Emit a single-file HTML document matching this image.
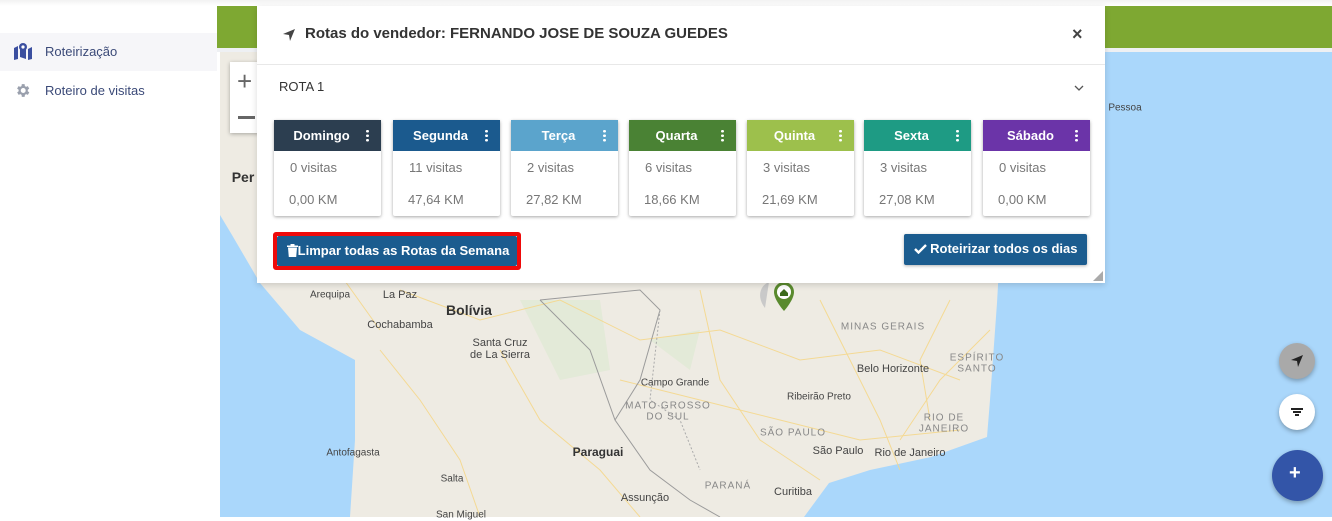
<!DOCTYPE html>
<html><head><meta charset="utf-8"><style>
*{margin:0;padding:0;box-sizing:border-box}
body{width:1332px;height:517px;overflow:hidden;background:#fff;font-family:"Liberation Sans",sans-serif;position:relative}
.abs{position:absolute}
.side{left:0;top:0;width:217px;height:517px;background:#fff}
.topshadow{left:0;top:0;width:1332px;height:6px;background:linear-gradient(#f2f2f2,#fff)}
.item{left:0;width:217px;height:38px;font-size:13px;color:#3b4a78}
.green{left:217px;top:6px;width:1115px;height:42px;background:#7ea832}
.gap{left:217px;top:48px;width:1115px;height:4px;background:#eef0f3}
.map{left:220px;top:52px;width:1112px;height:465px;background:#aad7fb;overflow:hidden}
.modal{left:257px;top:6px;width:848px;height:277px;background:#fff;box-shadow:0 2px 6px rgba(0,0,0,.15)}
.card{top:114px;width:107px;height:96px;background:#fff;box-shadow:0 1px 3px rgba(0,0,0,.35);border-radius:2px}
.card .h{height:31px;color:#fff;font-weight:bold;font-size:13px;line-height:31px;text-align:center;position:relative;padding-right:12px}
.card .h i{position:absolute;right:12px;top:9px;width:3px;height:13px;background:radial-gradient(circle,#fff 1.3px,transparent 1.5px) 0 0/3px 4.5px repeat-y}
.card .v{font-size:13px;color:#777;padding-left:16px;margin-top:9px}
.card .k{font-size:13px;color:#777;padding-left:15px;margin-top:17px}
.btn{background:#1b5c8f;color:#fff;font-weight:bold;font-size:13px;border-radius:2px;line-height:30px}
.lbl{font-size:11px;color:#444;position:absolute;white-space:nowrap;transform:translate(-50%,-50%)}
.st{font-size:10px;color:#888;letter-spacing:1px;position:absolute;white-space:nowrap;transform:translate(-50%,-50%)}
.fab{border-radius:50%;box-shadow:0 2px 5px rgba(0,0,0,.3)}
</style></head><body>
<div class="abs side"></div>
<div class="abs topshadow"></div>
<div class="abs item" style="top:33px;background:#f6f6f9"></div>
<svg class="abs" style="left:13px;top:42px" width="20" height="18" viewBox="0 0 20 18"><path d="M1 6l4-2v13l-4 1z M7 5l6 2v10l-6-2z M15 7l4-2v12l-4 1z" fill="#3b4fa0"/><circle cx="10" cy="5" r="4" fill="#3b4fa0"/><circle cx="10" cy="5" r="1.6" fill="#fff"/></svg>
<div class="abs" style="left:45px;top:44px;font-size:13px;color:#3b4a78">Roteirização</div>
<svg class="abs" style="left:14px;top:82px" width="17" height="17" viewBox="0 0 24 24"><path fill="#9aa0ad" d="M19.4 13a7.5 7.5 0 000-2l2.1-1.6-2-3.5-2.5 1a7 7 0 00-1.7-1L15 3h-4l-.4 2.9a7 7 0 00-1.7 1l-2.5-1-2 3.5L6.6 11a7.5 7.5 0 000 2l-2.1 1.6 2 3.5 2.5-1a7 7 0 001.7 1L11 21h4l.4-2.9a7 7 0 001.7-1l2.5 1 2-3.5zM13 15.5a3.5 3.5 0 110-7 3.5 3.5 0 010 7z"/></svg>
<div class="abs" style="left:45px;top:83px;font-size:13px;color:#3b4a78">Roteiro de visitas</div>

<div class="abs green"></div>
<div class="abs gap"></div>
<div class="abs map">
<svg width="1112" height="465" viewBox="220 52 1112 465" style="position:absolute;left:0;top:0">
<path d="M220 52 L1010 52 L1000 250 L997 303 L990 400 L987 437 L931 457 L870 470 L829 483 L804 517 L350 517 L355 440 L355 360 L300 330 L260 283 L232 235 L220 215 Z" fill="#eeebe3"/>
<path d="M520 300 L600 300 L610 370 L560 380 Z M650 340 L700 330 L690 370Z" fill="#e3ead8"/>
<g stroke="#f5d88c" stroke-width="1" fill="none" opacity=".9">
<path d="M400 290 L480 320 L560 300 L640 340 L720 330 L800 360 L880 350 L960 380"/>
<path d="M700 290 L720 380 L760 440 L820 480"/>
<path d="M820 300 L850 360 L880 420 L900 470"/>
<path d="M620 380 L700 400 L780 420 L860 440 L960 430"/>
<path d="M260 100 L300 180 L330 260 L380 330"/>
<path d="M950 300 L920 360 L930 420"/>
<path d="M500 350 L540 420 L600 470 L640 517"/>
<path d="M380 350 L420 400 L460 460 L480 517"/>
<path d="M990 330 L940 380 L900 440"/>
</g>
<path d="M540 300 L590 350 L615 420 L650 470 L690 500 L720 517" stroke="#9b9b9b" stroke-width="1" fill="none"/>
<path d="M540 300 L560 298 L640 290 L660 310 L640 380 L615 420" stroke="#9b9b9b" stroke-width="1" fill="none"/>
<path d="M660 310 L650 400 L680 420 L700 470" stroke="#aaa" stroke-width="1" fill="none" stroke-dasharray="2 2"/>
</svg>
</div>
<span class="lbl" style="left:243px;top:177px;font-size:14px;font-weight:bold;color:#333">Per</span>
<span class="lbl" style="left:330px;top:295px;font-size:10px">Arequipa</span>
<span class="lbl" style="left:400px;top:295px">La Paz</span>
<span class="lbl" style="left:469px;top:310px;font-size:14px;font-weight:bold;color:#333">Bolívia</span>
<span class="lbl" style="left:400px;top:325px">Cochabamba</span>
<span class="lbl" style="left:500px;top:343px">Santa Cruz</span>
<span class="lbl" style="left:500px;top:355px">de La Sierra</span>
<span class="lbl" style="left:675px;top:383px;font-size:10px">Campo Grande</span>
<span class="st" style="left:668px;top:406px">MATO GROSSO</span>
<span class="st" style="left:668px;top:417px">DO SUL</span>
<span class="st" style="left:883px;top:327px">MINAS GERAIS</span>
<span class="st" style="left:977px;top:358px">ESPÍRITO</span>
<span class="st" style="left:977px;top:369px">SANTO</span>
<span class="lbl" style="left:893px;top:369px">Belo Horizonte</span>
<span class="lbl" style="left:819px;top:397px;font-size:10px">Ribeirão Preto</span>
<span class="st" style="left:793px;top:433px">SÃO PAULO</span>
<span class="st" style="left:944px;top:418px">RIO DE</span>
<span class="st" style="left:944px;top:429px">JANEIRO</span>
<span class="lbl" style="left:838px;top:451px">São Paulo</span>
<span class="lbl" style="left:910px;top:453px">Rio de Janeiro</span>
<span class="lbl" style="left:598px;top:452px;font-size:12px;font-weight:bold;color:#333">Paraguai</span>
<span class="st" style="left:728px;top:486px">PARANÁ</span>
<span class="lbl" style="left:793px;top:492px">Curitiba</span>
<span class="lbl" style="left:645px;top:498px">Assunção</span>
<span class="lbl" style="left:353px;top:453px;font-size:10px">Antofagasta</span>
<span class="lbl" style="left:452px;top:479px;font-size:10px">Salta</span>
<span class="lbl" style="left:461px;top:515px;font-size:10px">San Miguel</span>
<span class="lbl" style="left:1125px;top:108px;font-size:10px">Pessoa</span>
<svg class="abs" style="left:755px;top:280px" width="40" height="32" viewBox="0 0 40 32"><path d="M14 2 C4 6 2 18 10 28 L14 2Z" fill="#c9c9c9"/><path d="M29 2a10 10 0 00-10 10c0 8 10 19 10 19s10-11 10-19A10 10 0 0029 2z" fill="#5a8a2e"/><circle cx="29" cy="12" r="7" fill="#fff"/><path d="M25 13l4-4 4 4v3h-8z" fill="#3c6b1c"/></svg>
<div class="abs" style="left:230px;top:62px;width:30px;height:71px;background:#fff;box-shadow:0 1px 4px rgba(0,0,0,.3)"></div>
<div class="abs" style="left:237px;top:66px;font-size:26px;color:#666">+</div>
<div class="abs" style="left:238px;top:116px;width:17px;height:3px;background:#666"></div>

<div class="abs modal">
 <svg class="abs" style="left:25px;top:22px" width="14" height="14" viewBox="0 0 14 14"><path d="M13 1L1 6l6 1 1 6z" fill="#444"/></svg>
 <div class="abs" style="left:48px;top:19px;font-size:15px;font-weight:bold;color:#333">Rotas do vendedor: FERNANDO JOSE DE SOUZA GUEDES</div>
 <div class="abs" style="left:815px;top:18px;font-size:18px;font-weight:bold;color:#444">×</div>
 <div class="abs" style="left:0;top:58px;width:848px;height:1px;background:#e8e8e8"></div>
 <div class="abs" style="left:22px;top:73px;font-size:13px;color:#333">ROTA 1</div>
 <svg class="abs" style="left:817px;top:78px" width="10" height="8" viewBox="0 0 10 8"><path d="M1 2l4 4 4-4" stroke="#555" stroke-width="1.3" fill="none"/></svg>
 <div class="abs card" style="left:17px"><div class="h" style="background:#2c3e50">Domingo<i></i></div><div class="v">0 visitas</div><div class="k">0,00 KM</div></div>
 <div class="abs card" style="left:136px"><div class="h" style="background:#1b5a8e">Segunda<i></i></div><div class="v">11 visitas</div><div class="k">47,64 KM</div></div>
 <div class="abs card" style="left:254px"><div class="h" style="background:#5ba4cc">Terça<i></i></div><div class="v">2 visitas</div><div class="k">27,82 KM</div></div>
 <div class="abs card" style="left:372px"><div class="h" style="background:#4a8234">Quarta<i></i></div><div class="v">6 visitas</div><div class="k">18,66 KM</div></div>
 <div class="abs card" style="left:490px"><div class="h" style="background:#9dc04c">Quinta<i></i></div><div class="v">3 visitas</div><div class="k">21,69 KM</div></div>
 <div class="abs card" style="left:607px"><div class="h" style="background:#1e9b84">Sexta<i></i></div><div class="v">3 visitas</div><div class="k">27,08 KM</div></div>
 <div class="abs card" style="left:726px"><div class="h" style="background:#6b34a8">Sábado<i></i></div><div class="v">0 visitas</div><div class="k">0,00 KM</div></div>
 <div class="abs" style="left:16px;top:226px;width:248px;height:38px;border:4px solid #ee0a0a;border-radius:3px"></div>
 <div class="abs btn" style="left:20px;top:230px;width:240px;height:30px;text-align:center;line-height:30px;padding-left:2px">
  <svg width="11" height="13" viewBox="0 0 11 13" style="vertical-align:-2px"><path d="M0 1.5h11v1.5H0zM3.5 0h4v1.5h-4zM1 3.5h9l-.8 9.5H1.8z" fill="#fff"/></svg>Limpar todas as Rotas da Semana</div>
 <div class="abs btn" style="left:647px;top:228px;width:183px;height:31px;text-align:center;box-shadow:0 1px 3px rgba(0,0,0,.3)">
  <svg width="13" height="11" viewBox="0 0 13 11" style="vertical-align:-1px"><path d="M1 6l3.5 3.5L12 2" stroke="#fff" stroke-width="2.4" fill="none"/></svg> Roteirizar todos os dias</div>
 <svg class="abs" style="left:836px;top:265px" width="10" height="10"><path d="M10 0v10H0z" fill="#aaa"/></svg>
</div>

<div class="abs fab" style="left:1279px;top:343px;width:36px;height:36px;background:#a9a9a9"></div>
<svg class="abs" style="left:1290px;top:354px" width="14" height="14" viewBox="0 0 14 14"><path d="M13 1L1 6l6 1 1 6z" fill="#222"/></svg>
<div class="abs fab" style="left:1279px;top:394px;width:36px;height:36px;background:#fff"></div>
<div class="abs" style="left:1291px;top:408px;width:12px;height:1.5px;background:#222"></div>
<div class="abs" style="left:1293px;top:411px;width:8px;height:1.5px;background:#222"></div>
<div class="abs" style="left:1295px;top:414px;width:4px;height:1.5px;background:#222"></div>
<div class="abs fab" style="left:1272px;top:450px;width:51px;height:51px;background:#3355a8"></div>
<div class="abs" style="left:1289px;top:462px;font-size:20px;color:#fff;font-weight:bold">+</div>
</body></html>
